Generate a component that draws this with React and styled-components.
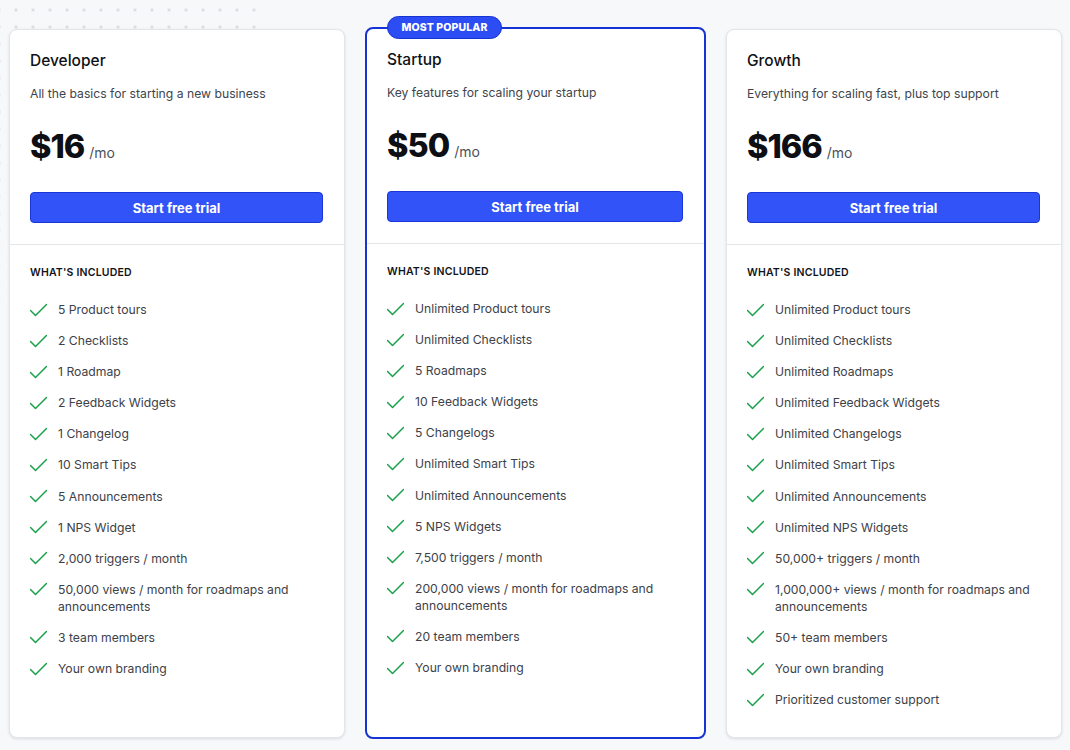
import React from "react";
import styled, { createGlobalStyle } from "styled-components";

const Global = createGlobalStyle`
  html, body { margin: 0; padding: 0; background: #f7f8fa; }
  body { font-family: Inter, "Noto Sans", sans-serif; -webkit-font-smoothing: antialiased; }
`;

const Page = styled.div`
  position: relative;
  min-height: 750px;
  padding: 29px 8px 12px 9px;
  box-sizing: border-box;
  &::before {
    content: "";
    position: absolute;
    left: 0;
    top: 0;
    width: 268px;
    height: 340px;
    background-image: radial-gradient(circle, #d6d9de 1.2px, transparent 1.6px);
    background-size: 17px 17px;
    background-position: -9.5px 1.5px;
    -webkit-mask-image: linear-gradient(to bottom, #000 40%, transparent 100%);
    mask-image: linear-gradient(to bottom, #000 40%, transparent 100%);
    pointer-events: none;
  }
`;

const Grid = styled.div`
  position: relative;
  display: grid;
  grid-template-columns: 336px 341px 336px;
  grid-auto-rows: 709px;
  column-gap: 20px;
  align-items: stretch;
`;

const Card = styled.div`
  position: relative;
  background: #fff;
  border: ${p => (p.$featured ? "2px solid #1633d4" : "1px solid #e3e5e9")};
  border-radius: 8px;
  box-shadow: ${p => (p.$featured ? "none" : "0 1px 3px rgba(16,24,40,0.12)")};
  margin: ${p => (p.$featured ? "-2px 0 -1px" : "0")};
  box-sizing: border-box;
  display: flex;
  flex-direction: column;
`;

const Badge = styled.div`
  position: absolute;
  top: -13px;
  left: 20px;
  height: 23px;
  padding: 0 13.5px;
  box-sizing: border-box;
  display: flex;
  align-items: center;
  background: #2c4df3;
  border: 1px solid #1633d4;
  border-radius: 999px;
  color: #fff;
  font-size: 10.5px;
  font-weight: 800;
  letter-spacing: 0.1px;
`;

const Top = styled.div`
  padding: 21px 21px 21px 20px;
  border-bottom: 1px solid #e4e6ea;
`;

const Title = styled.div`
  font-size: 15.5px;
  font-weight: 500;
  color: #0f1115;
  line-height: 20px;
`;

const Desc = styled.div`
  margin-top: 13px;
  font-size: 12.2px;
  color: #40444c;
  line-height: 20px;
`;

const PriceRow = styled.div`
  margin-top: 23px;
  display: flex;
  align-items: baseline;
  gap: 5px;
  height: 40px;
`;

const Amount = styled.span`
  font-size: 32.5px;
  font-weight: 800;
  letter-spacing: -1px;
  color: #0d0f14;
  line-height: 40px;
`;

const Per = styled.span`
  font-size: 14px;
  color: #4b5058;
`;

const Button = styled.button`
  margin-top: 25px;
  width: 100%;
  height: 31px;
  border: 1px solid #1a36d6;
  border-radius: 4px;
  background: #3153f8;
  color: #fff;
  font-family: Inter, sans-serif;
  font-size: 13px;
  font-weight: 700;
  cursor: pointer;
`;

const Bottom = styled.div`
  padding: 21px 20px 24px 20px;
`;

const Included = styled.div`
  font-size: 10.5px;
  font-weight: 600;
  color: #111318;
  letter-spacing: 0.2px;
  line-height: 14px;
`;

const List = styled.ul`
  list-style: none;
  margin: 21px 0 0;
  padding: 0;
  display: flex;
  flex-direction: column;
  gap: 14.1px;
`;

const Item = styled.li`
  display: flex;
  align-items: flex-start;
  gap: 11px;
  font-size: 12.2px;
  line-height: 17px;
  color: #3d4149;
`;

const CheckBox = styled.span`
  flex: none;
  width: 17px;
  height: 17px;
  display: flex;
  align-items: center;
  justify-content: center;
  color: #17a24a;
`;

const Check = () => (
  <CheckBox>
    <svg width="17" height="14" viewBox="3.5 5 17 13" fill="none" stroke="currentColor" strokeWidth="1.5" strokeLinecap="round" strokeLinejoin="round">
      <path d="M20 6 9 17l-5-5" />
    </svg>
  </CheckBox>
);

const plans = [
  {
    name: "Developer",
    desc: "All the basics for starting a new business",
    price: "$16",
    features: [
      "5 Product tours",
      "2 Checklists",
      "1 Roadmap",
      "2 Feedback Widgets",
      "1 Changelog",
      "10 Smart Tips",
      "5 Announcements",
      "1 NPS Widget",
      "2,000 triggers / month",
      "50,000 views / month for roadmaps and announcements",
      "3 team members",
      "Your own branding",
    ],
  },
  {
    name: "Startup",
    desc: "Key features for scaling your startup",
    price: "$50",
    featured: true,
    features: [
      "Unlimited Product tours",
      "Unlimited Checklists",
      "5 Roadmaps",
      "10 Feedback Widgets",
      "5 Changelogs",
      "Unlimited Smart Tips",
      "Unlimited Announcements",
      "5 NPS Widgets",
      "7,500 triggers / month",
      "200,000 views / month for roadmaps and announcements",
      "20 team members",
      "Your own branding",
    ],
  },
  {
    name: "Growth",
    desc: "Everything for scaling fast, plus top support",
    price: "$166",
    features: [
      "Unlimited Product tours",
      "Unlimited Checklists",
      "Unlimited Roadmaps",
      "Unlimited Feedback Widgets",
      "Unlimited Changelogs",
      "Unlimited Smart Tips",
      "Unlimited Announcements",
      "Unlimited NPS Widgets",
      "50,000+ triggers / month",
      "1,000,000+ views / month for roadmaps and announcements",
      "50+ team members",
      "Your own branding",
      "Prioritized customer support",
    ],
  },
];

export default function App() {
  return (
    <>
      <Global />
      <Page>
        <Grid>
          {plans.map(p => (
            <Card key={p.name} $featured={p.featured}>
              {p.featured && <Badge>MOST POPULAR</Badge>}
              <Top>
                <Title>{p.name}</Title>
                <Desc>{p.desc}</Desc>
                <PriceRow>
                  <Amount>{p.price}</Amount>
                  <Per>/mo</Per>
                </PriceRow>
                <Button>Start free trial</Button>
              </Top>
              <Bottom>
                <Included>WHAT'S INCLUDED</Included>
                <List>
                  {p.features.map(f => (
                    <Item key={f}>
                      <Check />
                      <span>{f}</span>
                    </Item>
                  ))}
                </List>
              </Bottom>
            </Card>
          ))}
        </Grid>
      </Page>
    </>
  );
}
